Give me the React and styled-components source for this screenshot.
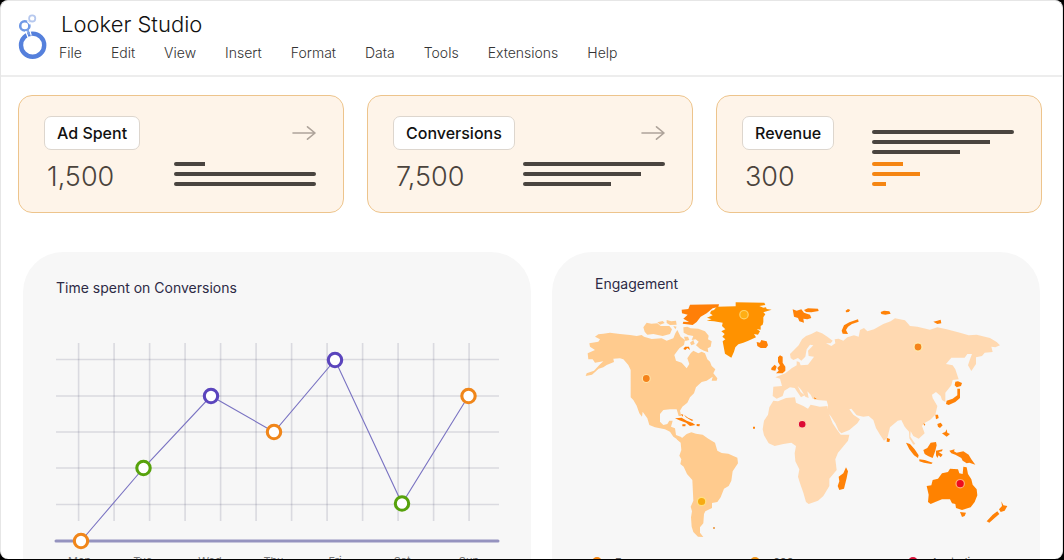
import React from "react";
import styled, { createGlobalStyle } from "styled-components";

const GlobalStyle = createGlobalStyle`
  *, *::before, *::after { box-sizing: border-box; }
  body {
    margin: 0;
    background: #000;
    font-family: Inter, "Liberation Sans", sans-serif;
  }
  h1, h2, p, ul { margin: 0; padding: 0; font-weight: 400; }
  ul { list-style: none; }
`;

const Frame = styled.div`
  height: calc(100vh - 1px);
  margin-right: 1px;
  overflow: hidden;
  background: #fff;
  border: 1px solid #e6e6e6;
  border-bottom: 0;
  border-radius: 8px;
`;

const Header = styled.header`
  display: flex;
  gap: 11px;
  height: 76px;
  padding: 12px 17px 0;
  border-bottom: 2px solid #ededed;
`;

const Brand = styled.div`
  flex: 1;
`;

const Title = styled.h1`
  padding-left: 2px;
  color: #111;
  font-size: 22px;
  font-weight: 300;
  line-height: 22px;
`;

const Nav = styled.nav`
  display: flex;
  gap: 29px;
  padding-top: 6px;
`;

const NavLink = styled.a`
  color: #333;
  font-size: 14px;
  font-weight: 300;
  line-height: 24px;
  text-decoration: none;
`;

const Main = styled.main`
  padding: 18px 20px 0 17px;
`;

const Cards = styled.section`
  display: grid;
  grid-template-columns: repeat(3, 1fr);
  gap: 23px;
`;

const Card = styled.article`
  display: grid;
  grid-template-columns: 130px 1fr;
  height: 118px;
  padding: 20px 27px 0 25px;
  background: #fef4e9;
  border: 1px solid #edc48c;
  border-radius: 14px;
`;

const Pill = styled.h2`
  width: max-content;
  padding: 0 12px;
  background: #fff;
  border: 1px solid #ddd6ce;
  border-radius: 7px;
  color: #111;
  font-size: 16px;
  font-weight: 500;
  line-height: 32px;
`;

const Value = styled.p`
  padding: 10px 0 0 3px;
  color: #4b433c;
  font-size: 27px;
  font-weight: 300;
  line-height: 34px;
`;

const CardSide = styled.div`
  display: flex;
  flex-direction: column;
  justify-content: flex-end;
  height: 70px;
`;

const ArrowButton = styled.button`
  display: block;
  align-self: flex-end;
  width: 24px;
  height: 16px;
  margin-bottom: 21px;
  padding: 0;
  border: 0;
  background: none;
  color: #aea39a;
  cursor: pointer;
`;

const Bars = styled.div`
  display: flex;
  flex-direction: column;
  gap: 6px;

  & + & { margin-top: 8px; }
`;

const Bar = styled.div`
  width: ${({ $size }) => $size}%;
  height: 4px;
  background: ${({ $accent }) => ($accent ? "#f58512" : "#4a443f")};
  border-radius: ${({ $size }) => ($size === 100 ? "2px" : "2px 0 0 2px")};
`;

const Panels = styled.section`
  display: grid;
  grid-template-columns: minmax(0, 508fr) minmax(0, 488fr);
  gap: 21px;
  margin: 39px 2px 0 5px;
`;

const Panel = styled.article`
  padding: ${({ $pad }) => $pad};
  background: #f7f7f7;
  border-radius: 40px;
`;

const PanelTitle = styled.h2`
  padding-left: ${({ $indent }) => $indent}px;
  color: #2d2a45;
  font-size: 14px;
  line-height: 20px;
`;

const Drawing = styled.svg`
  display: block;
  width: 100%;
  margin-top: ${({ $top }) => $top}px;
  overflow: visible;
`;

const Days = styled.ul`
  display: grid;
  grid-template-columns: repeat(7, 1fr);
  margin-right: -24px;
  padding: 3px 0 0 13px;
  color: #777;
  font-size: 11px;
  line-height: 16px;
`;

const Legend = styled.ul`
  display: grid;
  grid-template-columns: repeat(3, 1fr);
  margin-right: -54px;
  padding: 12px 0 0 12px;
`;

const LegendItem = styled.li`
  display: flex;
  align-items: center;
  gap: 13px;
  color: #666;
  font-size: 11px;
  line-height: 16px;
`;

const Dot = styled.span`
  width: 10px;
  height: 10px;
  border-radius: 50%;
  background: ${({ $color }) => $color};
`;

const menu = ["File", "Edit", "View", "Insert", "Format", "Data", "Tools", "Extensions", "Help"];

const cards = [
  { title: "Ad Spent", value: "1,500", bars: [22, 100, 100], arrow: true },
  { title: "Conversions", value: "7,500", bars: [100, 83, 62], arrow: true },
  { title: "Revenue", value: "300", bars: [100, 83, 62], accent: [22, 34, 10] },
];

const points = [
  [81, 541, "#f0861a"],
  [143.5, 468, "#57a20c"],
  [211, 396, "#5b45bd"],
  [274, 432, "#f0861a"],
  [335, 360, "#5b45bd"],
  [402, 503.5, "#57a20c"],
  [468.5, 396, "#f0861a"],
];

const legend = [
  ["Europe", "#f58512"],
  ["600", "#f0961a"],
  ["Australia", "#d8123a"],
];

function Logo() {
  return (
    <svg width="30" height="48" viewBox="18 13 30 48" fill="none" aria-hidden="true">
      <circle cx="32.6" cy="45.2" r="11.6" stroke="#5580dc" strokeWidth="4.4" />
      <circle cx="24.8" cy="25.9" r="4.6" stroke="#6f99e6" strokeWidth="2.6" />
      <circle cx="32.2" cy="18.4" r="3.1" stroke="#b6c8ee" strokeWidth="1.8" />
      <path d="M25.6 31L28.4 38.2M29.6 29.4L31.2 35.6M27.4 21.2L30.4 24.2" stroke="#fff" strokeWidth="1.3" />
      <path d="M27.4 29.4L29.4 34.6" stroke="#7fa3e6" strokeWidth="1.8" />
    </svg>
  );
}

function Arrow() {
  return (
    <svg width="24" height="16" viewBox="0 0 24 16" fill="none" stroke="currentColor" strokeWidth="1.6" strokeLinecap="round" strokeLinejoin="round">
      <path d="M1 8H23M15.5 1.8L23 8L15.5 14.2" />
    </svg>
  );
}

function LineChart() {
  return (
    <Drawing $top={42} viewBox="55 340 445 210" role="img" aria-label="Time spent on conversions by day">
      <g stroke="#34345e" strokeOpacity="0.15" strokeWidth="1.6">
        {Array.from({ length: 12 }, (_, i) => (
          <path key={i} d={`M${78.6 + i * 35.5} 343V521`} />
        ))}
        {[359.5, 396, 432, 468, 504.5].map((y) => (
          <path key={y} d={`M56 ${y}H499`} />
        ))}
      </g>
      <path d="M56 541H498" stroke="#9593bf" strokeWidth="3" strokeLinecap="round" />
      <polyline points={points.map(([x, y]) => `${x},${y}`).join(" ")} fill="none" stroke="#7a73c2" strokeWidth="1.1" />
      {points.map(([x, y, color]) => (
        <circle key={x} cx={x} cy={y} r="6.7" fill="#fff" stroke={color} strokeWidth="3.1" />
      ))}
    </Drawing>
  );
}

function WorldMap() {
  return (
    <Drawing $top={4} viewBox="580 298 432 244" role="img" aria-label="Engagement by region">
      {/* North America and Greenland */}
      <g transform="translate(570 290) scale(.33333)">
        <g fill="#ffcb8e">
          <path d="M75 140L85 133 100 131 120 128 150 132 180 135 200 138 215 135 222 140 245 147 275 145 290 152 310 145 316 130 322 120 332 140 345 150 342 165 328 175 313 195 318 212 335 218 350 235 358 222 352 205 362 190 370 182 385 190 395 185 405 190 412 208 420 215 425 228 436 238 430 250 442 265 440 272 425 272 428 260 410 272 395 276 385 285 378 292 372 310 360 322 352 338 337 350 330 362 334 378 326 378 320 358 300 358 280 360 270 372 270 395 280 405 292 402 298 392 308 392 303 410 315 415 318 435 335 442 328 452 310 440 300 425 285 418 255 412 238 405 232 385 218 365 216 380 208 370 200 347 190 330 182 322 182 240 175 225 160 208 150 205 130 206 132 216 110 225 100 232 86 236 66 254 47 258 50 250 72 242 88 225 100 214 75 218 68 208 55 208 53 190 75 180 60 170 58 160 85 155 90 148Z" />
          <path d="M220 112L230 98 244 101 262 100 272 108 298 108 306 118 300 132 278 138 250 132 232 134 224 125Z" />
          <path d="M262 97L278 93 284 99 270 104ZM290 90L304 94 318 92 320 104 300 105 290 99ZM310 108L320 110 316 118Z" />
          <path d="M340 112L352 110 362 115 385 116 405 124 416 137 414 148 425 154 422 170 413 175 415 187 402 182 390 176 378 166 386 155 377 148 365 150 370 138 354 135 341 128Z" />
          <path d="M360 158L370 150 374 162 364 166ZM342 140L354 140 358 150 346 153Z" />
        </g>
        <path fill="#ff7f08" d="M335 59L355 57 360 44 447 43 445 51 428 55 410 70 392 80 380 96 368 105 338 101 340 95 357 96 340 86 353 74 336 70ZM340 177L345 170 357 170 360 180 352 174 346 180Z" />
        <path fill="#ff7f08" d="M315 385L335 383 350 392 368 399 376 405 360 408 348 398 328 391ZM342 374L354 383 370 390 366 393 348 382ZM337 403L347 403 346 409 337 409ZM380 402L390 403 388 409 380 408ZM333 372L340 374 337 380Z" />
        <path fill="#ff9200" d="M410 92L425 88 411 83 428 76 420 70 424 62 432 60 440 50 497 49 497 37 583 38 586 45 568 48 580 53 588 52 590 57 605 59 590 64 580 67 586 73 580 82 580 96 578 104 572 108 572 119 560 117 570 124 564 134 552 132 558 142 535 152 520 158 505 163 496 172 492 185 484 203 465 191 461 170 458 154 466 148 457 140 464 132 454 124 466 118 456 108 458 98 432 94Z" />
      </g>
      {/* South America */}
      <path
        transform="translate(640 410) scale(.33333)"
        fill="#ffcb8e"
        d="M110 88L120 80 126 84 140 72 154 67 168 71 188 74 205 86 225 98 232 122 245 129 265 131 292 143 294 160 278 184 274 212 266 228 252 236 242 262 232 276 216 279 216 294 196 304 192 312 190 340 180 352 180 368 190 381 174 380 160 366 155 350 153 322 156 304 152 290 160 272 157 210 141 192 131 170 121 162 124 148 118 137 124 120 122 98Z"
      />
      {/* Europe and Asia */}
      <g transform="translate(730 290) scale(.33333)">
        <path fill="#ffd9b1" d="M180 192L192 180 206 166 216 148 228 138 244 132 260 124 276 130 292 140 308 152 302 160 288 160 304 168 316 160 314 148 326 146 340 152 352 142 372 136 386 140 390 120 402 114 412 124 432 118 460 102 482 94 495 85 525 91 540 108 562 110 600 119 622 112 650 118 690 128 716 136 740 134 780 144 800 156 810 166 796 172 784 170 788 186 764 188 756 198 738 202 738 222 724 243 714 226 720 208 726 192 712 192 704 203 664 203 648 222 668 226 676 238 686 268 668 270 664 286 646 308 646 336 636 330 632 318 618 306 606 314 608 324 622 348 616 374 600 390 582 400 576 408 584 430 566 446 550 438 542 424 541 440 556 462 550 464 538 445 537 425 524 410 514 390 503 392 480 412 472 444 462 452 450 434 438 414 430 390 416 378 400 380 380 376 364 356 358 358 370 374 390 388 382 400 358 420 334 430 326 422 316 400 302 378 292 368 294 346 290 332 262 330 248 326 242 314 232 304 236 324 226 320 214 300 203 288 212 306 224 316 213 322 194 294 180 292 163 302 158 318 140 326 128 318 130 290 156 288 150 266 136 262 166 250 186 234 200 226 200 214 208 216 212 226 234 224 252 200 236 198 234 182 250 166 240 164 230 178 226 200 214 212 204 204 190 210 182 204Z" />
        <g fill="#ff8208">
          <path d="M188 58L200 62 214 58 222 68 240 74 244 84 232 88 220 86 222 98 208 94 204 84 192 80ZM222 60L234 55 264 56 266 63 244 67 228 66ZM347 62L354 57 361 60 356 66 348 67ZM335 122L342 106 358 97 384 88 386 95 366 102 354 110 348 120 354 132 338 131ZM452 66L462 62 478 64 482 71 466 74 454 72ZM610 95L622 92 632 89 634 100 622 102Z" />
          <path d="M80 156L90 158 94 150 110 154 114 166 108 174 92 174 82 168ZM124 234L134 224 140 230 136 242 124 240ZM144 202L150 196 158 200 158 218 166 230 166 242 158 250 138 250 146 242 142 234 150 226 144 216Z" />
          <path d="M676 275L684 274 696 279 693 288 680 292 674 286ZM682 296L690 296 690 324 676 336 656 345 648 342 650 332 668 326 682 316Z" />
          <path d="M252 322L260 326 254 328ZM69 410H75V416H69ZM616 374L624 374 626 384 618 388ZM580 400L586 402 583 408Z" />
        </g>
      </g>
      {/* Africa */}
      <g transform="translate(750 410) scale(.33333)">
        <path fill="#ffd9b1" d="M70 -28L84 -26 108 -36 135 -38 138 -22 160 -12 174 -4 182 -16 210 -10 232 -12 236 10 248 40 260 58 272 74 298 74 294 92 264 128 256 148 260 180 238 206 238 228 220 258 204 272 176 282 168 276 160 248 150 220 144 200 148 178 136 154 134 130 138 108 124 98 100 102 74 108 56 100 42 76 38 58 42 32 54 14 58 -8Z" />
        <path fill="#ff8208" d="M288 172L294 184 290 204 282 236 268 240 263 228 268 214 266 200 280 190Z" />
      </g>
      {/* South-East Asia and Oceania */}
      <g transform="translate(870 410) scale(.33333)">
        <path fill="#ff8200" d="M170 228L184 226 188 210 204 206 216 190 234 186 240 176 264 178 268 190 278 192 280 170 290 172 294 192 304 208 308 224 320 238 322 256 314 276 302 292 276 300 258 294 256 282 246 280 240 268 216 268 196 276 182 282 174 276 176 254Z" />
        <g fill="#ff8208">
          <path d="M270 306L288 308 284 318 276 321ZM394 274L400 286 412 288 404 302 392 306 387 298 396 288ZM350 334L368 314 382 304 388 312 374 324 358 338Z" />
          <path d="M108 98L120 102 134 118 146 136 144 144 132 136 118 118ZM148 148L164 150 188 158 184 162 162 158 148 154ZM160 120L172 114 182 98 198 96 200 106 196 122 188 144 174 138 164 132ZM198 122L218 118 216 124 206 126 218 134 212 142 206 136 202 144 198 136Z" />
          <path d="M238 122L254 118 252 124 260 128 280 124 296 134 304 148 316 164 298 158 290 160 278 152 274 144 256 134 244 130ZM202 42L212 38 218 46 210 54 204 50ZM216 70L226 66 230 58 232 68 240 72 230 80 224 76Z" />
          <path d="M51 84L60 87 58 96 50 95Z" />
        </g>
      </g>
      <path d="M713 528H715" stroke="#e99338" strokeWidth="1.5" />
      <g strokeWidth="1.2">
        <circle cx="646.3" cy="378.5" r="4" fill="#f5831b" stroke="#ffe3a8" />
        <circle cx="744" cy="314.7" r="4.2" fill="#ffae14" stroke="#ffd268" />
        <circle cx="701.6" cy="501.5" r="4.2" fill="#f7ab12" stroke="#ffdf80" />
        <circle cx="802.2" cy="424.2" r="3.9" fill="#dc0b34" stroke="#ffd9b8" />
        <circle cx="918" cy="347" r="4" fill="#f5831b" stroke="#ffefb0" />
        <circle cx="960.2" cy="483.7" r="4.2" fill="#ee0b1f" stroke="#ffad78" />
      </g>
    </Drawing>
  );
}

function MetricCard({ title, value, bars, accent, arrow }) {
  return (
    <Card>
      <div>
        <Pill>{title}</Pill>
        <Value>{value}</Value>
      </div>
      <CardSide>
        {arrow && (
          <ArrowButton type="button" aria-label={`Open ${title}`}>
            <Arrow />
          </ArrowButton>
        )}
        <Bars>
          {bars.map((size, i) => (
            <Bar key={i} $size={size} />
          ))}
        </Bars>
        {accent && (
          <Bars>
            {accent.map((size, i) => (
              <Bar key={i} $size={size} $accent />
            ))}
          </Bars>
        )}
      </CardSide>
    </Card>
  );
}

export default function App() {
  return (
    <>
      <GlobalStyle />
      <Frame>
        <Header>
          <Logo />
          <Brand>
            <Title>Looker Studio</Title>
            <Nav>
              {menu.map((item) => (
                <NavLink key={item} href="#">
                  {item}
                </NavLink>
              ))}
            </Nav>
          </Brand>
        </Header>
        <Main>
          <Cards>
            {cards.map((card) => (
              <MetricCard key={card.title} {...card} />
            ))}
          </Cards>
          <Panels>
            <Panel $pad="26px 31px 40px 32px">
              <PanelTitle $indent={1}>Time spent on Conversions</PanelTitle>
              <LineChart />
              <Days>
                {["Mon", "Tue", "Wed", "Thu", "Fri", "Sat", "Sun"].map((day) => (
                  <li key={day}>{day}</li>
                ))}
              </Days>
            </Panel>
            <Panel $pad="22px 28px 40px">
              <PanelTitle $indent={15}>Engagement</PanelTitle>
              <WorldMap />
              <Legend>
                {legend.map(([label, color]) => (
                  <LegendItem key={label}>
                    <Dot $color={color} />
                    {label}
                  </LegendItem>
                ))}
              </Legend>
            </Panel>
          </Panels>
        </Main>
      </Frame>
    </>
  );
}
